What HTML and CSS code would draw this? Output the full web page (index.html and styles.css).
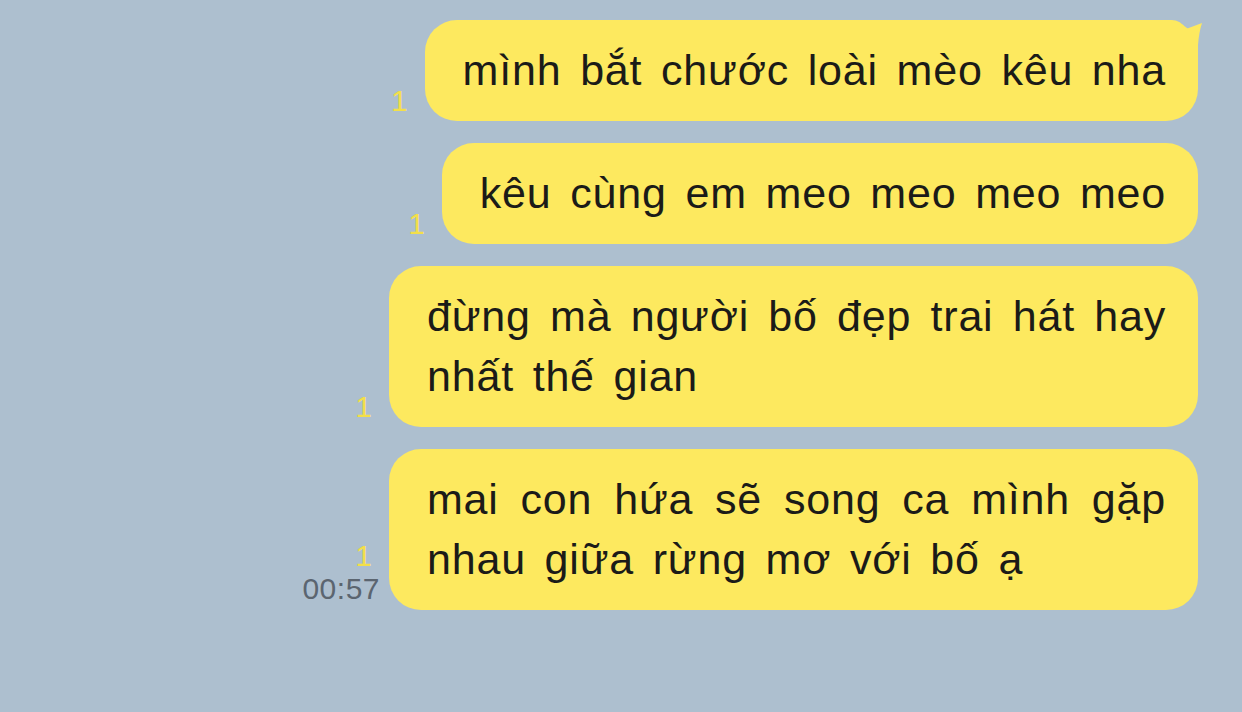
FILE: index.html
```html
<!DOCTYPE html>
<html lang="vi">
<head>
<meta charset="utf-8">
<link rel="stylesheet" href="styles.css">
</head>
<body>
<div class="chat">
  <div class="row">
    <div class="meta"><span class="read">1</span></div>
    <div class="bubble">mình bắt chước loài mèo kêu nha
      <svg class="tail" width="46" height="40" viewBox="0 0 46 40"><path d="M0 0 L12 0 Q22 0 27 9 Q35 6 43 3 Q40 12 39 25 L39 40 L0 40 Z" fill="#fde95f"/></svg>
    </div>
  </div>
  <div class="row">
    <div class="meta"><span class="read">1</span></div>
    <div class="bubble">kêu cùng em meo meo meo meo</div>
  </div>
  <div class="row">
    <div class="meta"><span class="read">1</span></div>
    <div class="bubble">đừng mà người bố đẹp trai hát hay nhất thế gian</div>
  </div>
  <div class="row">
    <div class="meta"><span class="read">1</span><span class="time">00:57</span></div>
    <div class="bubble">mai con hứa sẽ song ca mình gặp nhau giữa rừng mơ với bố ạ</div>
  </div>
</div>
</body>
</html>
```

FILE: styles.css
```css
html, body {
  margin: 0;
  padding: 0;
  background: #adbfcf;
  width: 1242px;
  height: 712px;
  overflow: hidden;
}
.chat {
  display: flex;
  flex-direction: column;
  align-items: flex-end;
  gap: 22px;
  padding: 20px 44px 0 0;
  font-family: "Liberation Sans", Arial, sans-serif;
}
.row {
  display: flex;
  align-items: flex-end;
}
.meta {
  display: flex;
  flex-direction: column;
  align-items: flex-end;
  margin-right: 9px;
  padding-bottom: 4px;
}
.read {
  color: #f3df4a;
  font-size: 30px;
  line-height: 32px;
  margin-right: 8px;
}
.time {
  color: #5b6570;
  font-size: 30px;
  letter-spacing: 0.5px;
  line-height: 34px;
}
.bubble {
  position: relative;
  background: #fde95f;
  color: #1b1b18;
  font-size: 43px;
  letter-spacing: 0.8px;
  word-spacing: 6px;
  line-height: 60px;
  padding: 20px 32px 21px 38px;
  border-radius: 32px;
  max-width: 739px;
  text-align: justify;
}
.tail {
  position: absolute;
  right: -7px;
  top: 0;
}
```
